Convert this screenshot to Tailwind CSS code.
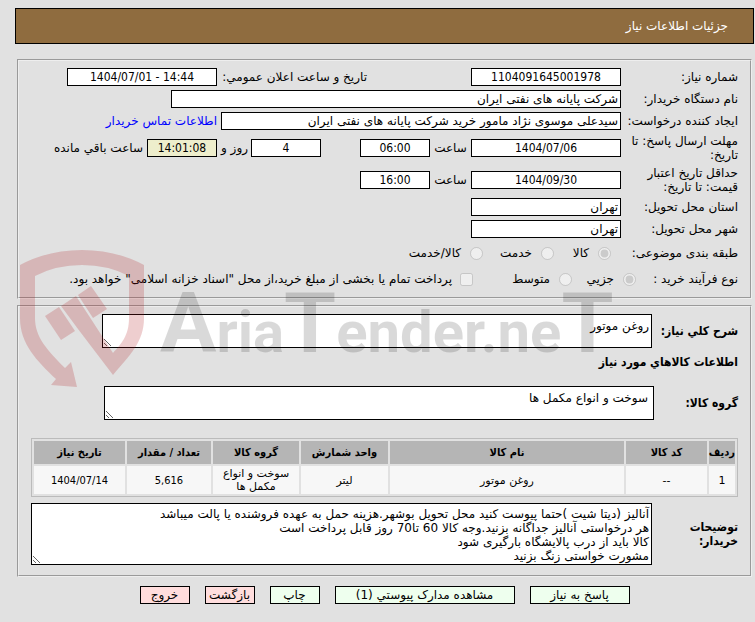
<!DOCTYPE html>
<html lang="fa" dir="rtl">
<head>
  <meta charset="UTF-8">
  <meta name="viewport" content="width=device-width, initial-scale=1">
  <title>جزئیات اطلاعات نیاز</title>
  <script src="https://cdn.jsdelivr.net/npm/@tailwindcss/browser@4"></script>
</head>
<body class="relative min-h-screen bg-[#e1e1e1] pt-2 pr-px pl-[15px] font-['DejaVu_Sans',sans-serif] text-xs leading-[14px] text-black">
  <header class="flex h-9 items-center border border-black bg-[#8f6c3f] px-[25px]">
    <h1 class="text-white">جزئیات اطلاعات نیاز</h1>
  </header>

  <main>
    <!-- need details -->
    <fieldset class="mt-[15px] mr-0.5 ml-0.5 border-2 border-[#eeeeee] py-[5px] ps-3 pe-[11px] [border-style:groove]">
      <div class="flex h-[22px] items-center">
        <label for="need-no" class="w-[117px] shrink-0">شماره نیاز:</label>
        <input id="need-no" class="h-[18px] w-[150px] border border-black bg-white text-center font-['DejaVu_Sans_Condensed',sans-serif]" value="1104091645001978" readonly>
        <label for="announce" class="ms-[104px] w-[150px] shrink-0 whitespace-nowrap">تاریخ و ساعت اعلان عمومي:</label>
        <input id="announce" dir="ltr" class="h-[18px] w-[150px] border border-black bg-white text-center font-['DejaVu_Sans_Condensed',sans-serif]" value="1404/07/01 - 14:44" readonly>
      </div>
      <div class="flex h-[22px] items-center">
        <label for="org" class="w-[117px] shrink-0">نام دستگاه خریدار:</label>
        <input id="org" class="h-[18px] w-[450px] border border-black bg-white px-0.5" value="شرکت پایانه های نفتی ایران" readonly>
      </div>
      <div class="flex h-[22px] items-center">
        <label for="creator" class="w-[117px] shrink-0 whitespace-nowrap">ایجاد کننده درخواست:</label>
        <input id="creator" class="h-[18px] w-[400px] border border-black bg-white px-0.5" value="سیدعلی موسوی نژاد مامور خرید شرکت پایانه های نفتی ایران" readonly>
        <a href="#" class="ms-1 whitespace-nowrap text-[#0000ff]">اطلاعات تماس خریدار</a>
      </div>
      <div class="flex h-8 items-center">
        <label for="reply-date" class="w-[117px] shrink-0 whitespace-nowrap">مهلت ارسال پاسخ: تا<br>تاریخ:</label>
        <input id="reply-date" class="h-[18px] w-[150px] border border-black bg-white text-center font-['DejaVu_Sans_Condensed',sans-serif]" value="1404/07/06" readonly>
        <label for="reply-time" class="w-[41px] shrink-0 text-center">ساعت</label>
        <input id="reply-time" class="h-[18px] w-[70px] border border-black bg-white text-center font-['DejaVu_Sans_Condensed',sans-serif]" value="06:00" readonly>
        <input id="days" class="ms-[39px] h-[18px] w-[70px] border border-black bg-white text-center font-['DejaVu_Sans_Condensed',sans-serif]" value="4" readonly>
        <label for="days" class="w-[34px] shrink-0 ps-[3px] whitespace-nowrap">روز و</label>
        <input id="left" class="h-[18px] w-[70px] border border-black bg-[#eeeecc] text-center font-['DejaVu_Sans_Condensed',sans-serif]" value="14:01:08" readonly>
        <label for="left" class="ms-1 whitespace-nowrap">ساعت باقي مانده</label>
      </div>
      <div class="flex h-8 items-center">
        <label for="valid-date" class="w-[117px] shrink-0">حداقل تاریخ اعتبار<br>قیمت: تا تاریخ:</label>
        <input id="valid-date" class="h-[18px] w-[150px] border border-black bg-white text-center font-['DejaVu_Sans_Condensed',sans-serif]" value="1404/09/30" readonly>
        <label for="valid-time" class="w-[41px] shrink-0 text-center">ساعت</label>
        <input id="valid-time" class="h-[18px] w-[70px] border border-black bg-white text-center font-['DejaVu_Sans_Condensed',sans-serif]" value="16:00" readonly>
      </div>
      <div class="flex h-[22px] items-center">
        <label for="province" class="w-[117px] shrink-0">استان محل تحویل:</label>
        <input id="province" class="h-[18px] w-[150px] border border-black bg-white px-0.5" value="تهران" readonly>
      </div>
      <div class="flex h-[22px] items-center">
        <label for="city" class="w-[117px] shrink-0">شهر محل تحویل:</label>
        <input id="city" class="h-[18px] w-[150px] border border-black bg-white px-0.5" value="تهران" readonly>
      </div>
      <div class="flex h-[26px] items-center" role="radiogroup" aria-labelledby="subject">
        <span id="subject" class="w-[127px] shrink-0">طبقه بندی موضوعی:</span>
        <label class="flex w-[57px] shrink-0 items-center gap-[9px]"><input type="radio" name="subject" class="size-[13px]" checked disabled>کالا</label>
        <label class="flex w-[71px] shrink-0 items-center gap-[9px]"><input type="radio" name="subject" class="size-[13px]" disabled>خدمت</label>
        <label class="flex items-center gap-[9px]"><input type="radio" name="subject" class="size-[13px]" disabled>کالا/خدمت</label>
      </div>
      <div class="flex h-[26px] items-center" role="radiogroup" aria-labelledby="process">
        <span id="process" class="w-[102px] shrink-0">نوع فرآیند خرید :</span>
        <label class="flex w-16 shrink-0 items-center gap-[9px]"><input type="radio" name="process" class="size-[13px]" checked disabled>جزیي</label>
        <label class="flex w-[99px] shrink-0 items-center gap-[9px]"><input type="radio" name="process" class="size-[13px]" disabled>متوسط</label>
        <label class="flex items-center gap-2 whitespace-nowrap"><input type="checkbox" class="size-[13px]" disabled>پرداخت تمام یا بخشی از مبلغ خرید،از محل "اسناد خزانه اسلامی" خواهد بود.</label>
      </div>
    </fieldset>

    <!-- goods -->
    <fieldset class="mt-1.5 mr-0.5 ml-0.5 border-2 border-[#eeeeee] ps-3 pe-[11px] pt-[7px] pb-2.5 [border-style:groove]">
      <div class="flex items-center">
        <label for="summary" class="w-[86px] shrink-0 whitespace-nowrap font-['DejaVu_Sans_Condensed',sans-serif] font-bold">شرح کلي نیاز:</label>
        <textarea id="summary" class="h-[34px] w-[550px] border border-black bg-white px-0.5 pt-1" readonly>روغن موتور</textarea>
      </div>
      <h2 class="pt-[7px] pb-[17px] font-['DejaVu_Sans_Condensed',sans-serif] font-bold">اطلاعات کالاهاي مورد نیاز</h2>
      <div class="flex items-center">
        <label for="group" class="w-[84px] shrink-0 font-['DejaVu_Sans_Condensed',sans-serif] font-bold">گروه کالا:</label>
        <textarea id="group" class="h-[34px] w-[550px] border border-black bg-white px-[5px] pt-1" readonly>سوخت و انواع مکمل ها</textarea>
      </div>

      <div class="me-px mt-[18px]">
        <table class="w-full table-fixed border-separate border-spacing-0.5 border border-[#bbbbbb] text-center text-[11px]">
          <thead class="font-['DejaVu_Sans_Condensed',sans-serif]">
            <tr class="h-[23px] bg-[#b5b5b5]">
              <th class="w-[26px]">ردیف</th>
              <th class="w-[81px]">کد کالا</th>
              <th>نام کالا</th>
              <th class="w-[87px]">واحد شمارش</th>
              <th class="w-[86px]">گروه کالا</th>
              <th class="w-[84px]">تعداد / مقدار</th>
              <th class="w-[91px]">تاریخ نیاز</th>
            </tr>
          </thead>
          <tbody>
            <tr class="h-7 bg-[#f7f7f7] leading-[13px]">
              <td>1</td>
              <td>--</td>
              <td>روغن موتور</td>
              <td>لیتر</td>
              <td>سوخت و انواع<br>مکمل ها</td>
              <td class="font-['DejaVu_Sans_Condensed',sans-serif]">5,616</td>
              <td class="font-['DejaVu_Sans_Condensed',sans-serif]">1404/07/14</td>
            </tr>
          </tbody>
        </table>
      </div>

      <div class="mt-1.5 flex items-center">
        <label for="notes" class="w-[86px] shrink-0 font-['DejaVu_Sans_Condensed',sans-serif] font-bold">توضیحات<br>خریدار:</label>
        <textarea id="notes" class="me-px h-[62px] grow border border-black bg-white px-0.5 pt-[3px]" readonly>آنالیز (دیتا شیت )حتما پیوست کنید محل تحویل بوشهر.هزینه حمل به عهده فروشنده یا پالت میباشد
هر درخواستی آنالیز جداگانه بزنید.وجه کالا 60 تا70 روز قابل پرداخت است
کالا باید از درب پالایشگاه بارگیری شود
مشورت خواستی زنگ بزنید</textarea>
      </div>
    </fieldset>
  </main>

  <div class="mt-[9px] flex justify-center gap-[15px]">
    <button type="button" class="h-[18px] w-[100px] border border-black bg-[#eeffee] leading-4">پاسخ به نیاز</button>
    <button type="button" class="h-[18px] w-[180px] border border-black bg-[#eeffee] leading-4">مشاهده مدارک پیوستي (1)</button>
    <button type="button" class="h-[18px] w-[50px] border border-black bg-[#eeffee] leading-4">چاپ</button>
    <button type="button" class="h-[18px] w-[50px] border border-black bg-[#ffdddd] leading-4">بازگشت</button>
    <button type="button" class="h-[18px] w-[50px] border border-black bg-[#ffdddd] leading-4">خروج</button>
  </div>

  <!-- watermark over the form -->
  <svg class="pointer-events-none absolute top-[248px] left-5" width="600" height="142" viewBox="20 248 600 142" direction="ltr" aria-hidden="true">
    <g fill="#af191e" fill-opacity="0.21">
      <path d="M20 265Q48 250 82 250Q116 250 144 265V318C144 342 130 355 113 375L78 329L61 306L76 296L91 319L113 353C121 344 129 336 129 318V276Q108 265 82 265Q56 265 35 276V318C35 337 47 350 65 368L71 362L77 387L51 385L56 379C37 361 20 344 20 318Z"/>
      <path d="M45 316L59 307L75 331L61 340Z"/>
      <path d="M78 295L91 286L107 309L93 318Z"/>
    </g>
    <text x="160" y="352" fill="#000000" fill-opacity="0.15" font-family="Roboto, 'Liberation Sans', sans-serif" font-weight="bold" font-size="58"><tspan font-size="84">A</tspan>ria<tspan font-size="84">T</tspan>ender.ne<tspan font-size="84">T</tspan></text>
  </svg>
</body>
</html>
